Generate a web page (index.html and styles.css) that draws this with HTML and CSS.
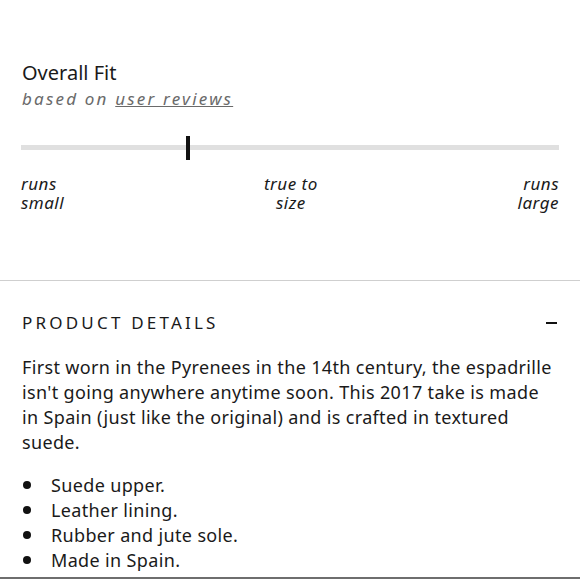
FILE: index.html
```html
<!DOCTYPE html>
<html>
<head>
    <meta charset="UTF-8">
    <link rel="stylesheet" href="styles.css">
</head>
<body>
    <div class="fit-panel">
        <h3 class="fit-title">Overall Fit</h3>
        <p class="fit-subtitle">based on <a href="#">user reviews</a></p>

        <div class="fit-scale">
            <div class="fit-track"></div>
            <div class="fit-marker" style="left: 30.7%;"></div>
        </div>

        <div class="fit-labels">
            <span class="fit-label">runs<br>small</span>
            <span class="fit-label fit-label-mid">true to<br>size</span>
            <span class="fit-label fit-label-end">runs<br>large</span>
        </div>
    </div>

    <div class="details-panel">
        <div class="details-header">
            <h4>PRODUCT DETAILS</h4>
            <span class="details-toggle"></span>
        </div>
        <p class="details-text">First worn in the Pyrenees in the 14th century, the espadrille isn't going anywhere anytime soon. This 2017 take is made in Spain (just like the original) and is crafted in textured suede.</p>
        <ul class="details-list">
            <li>Suede upper.</li>
            <li>Leather lining.</li>
            <li>Rubber and jute sole.</li>
            <li>Made in Spain.</li>
        </ul>
    </div>
</body>
</html>
```

FILE: styles.css
```css
body {
    margin: 0;
    background: #fff;
    color: #1a1a1a;
    font-family: 'Noto Sans', 'Open Sans', sans-serif;
}
.fit-panel {
    padding: 59px 21px 0 21px;
    height: 221px;
    border-bottom: 1px solid #cfcfcf;
}
.fit-title {
    margin: 0 0 0 1px;
    font-size: 20px;
    font-weight: normal;
    line-height: 27px;
}
.fit-subtitle {
    margin: 1px 0 0 1px;
    font-size: 17px;
    font-style: italic;
    letter-spacing: 2.2px;
    color: #6a6a6a;
    line-height: 24px;
}
.fit-subtitle a {
    color: #6a6a6a;
}
.fit-scale {
    position: relative;
    margin-top: 25px;
    height: 24px;
}
.fit-track {
    position: relative;
    top: 9px;
    height: 5px;
    background: #e0e0e0;
}
.fit-marker {
    position: absolute;
    top: 0;
    width: 4px;
    height: 24px;
    background: #111;
}
.fit-labels {
    display: flex;
    justify-content: space-between;
    margin-top: 14px;
}
.fit-label {
    font-size: 17px;
    font-style: italic;
    line-height: 19px;
    letter-spacing: 0.5px;
    color: #1a1a1a;
}
.fit-label-mid {
    text-align: center;
}
.fit-label-end {
    text-align: right;
}
.details-panel {
    padding: 0 20px 0 22px;
    height: 296px;
    border-bottom: 2px solid #6e6e6e;
}
.details-header {
    display: flex;
    justify-content: space-between;
    align-items: center;
    padding-top: 31px;
}
.details-header h4 {
    margin: 0;
    font-size: 17px;
    font-weight: normal;
    letter-spacing: 3.2px;
    line-height: 22px;
}
.details-toggle {
    width: 11px;
    height: 2px;
    margin-right: 3px;
    background: #111;
}
.details-text {
    margin: 21px 0 0 0;
    font-size: 18px;
    line-height: 25px;
    letter-spacing: 0.35px;
    color: #1a1a1a;
}
.details-list {
    margin: 18px 0 0 0;
    padding: 0;
    list-style: none;
}
.details-list li {
    position: relative;
    padding-left: 29px;
    font-size: 18px;
    line-height: 25px;
    letter-spacing: 0.35px;
}
.details-list li::before {
    content: '';
    position: absolute;
    left: 1px;
    top: 8px;
    width: 8px;
    height: 8px;
    border-radius: 50%;
    background: #111;
}
```
